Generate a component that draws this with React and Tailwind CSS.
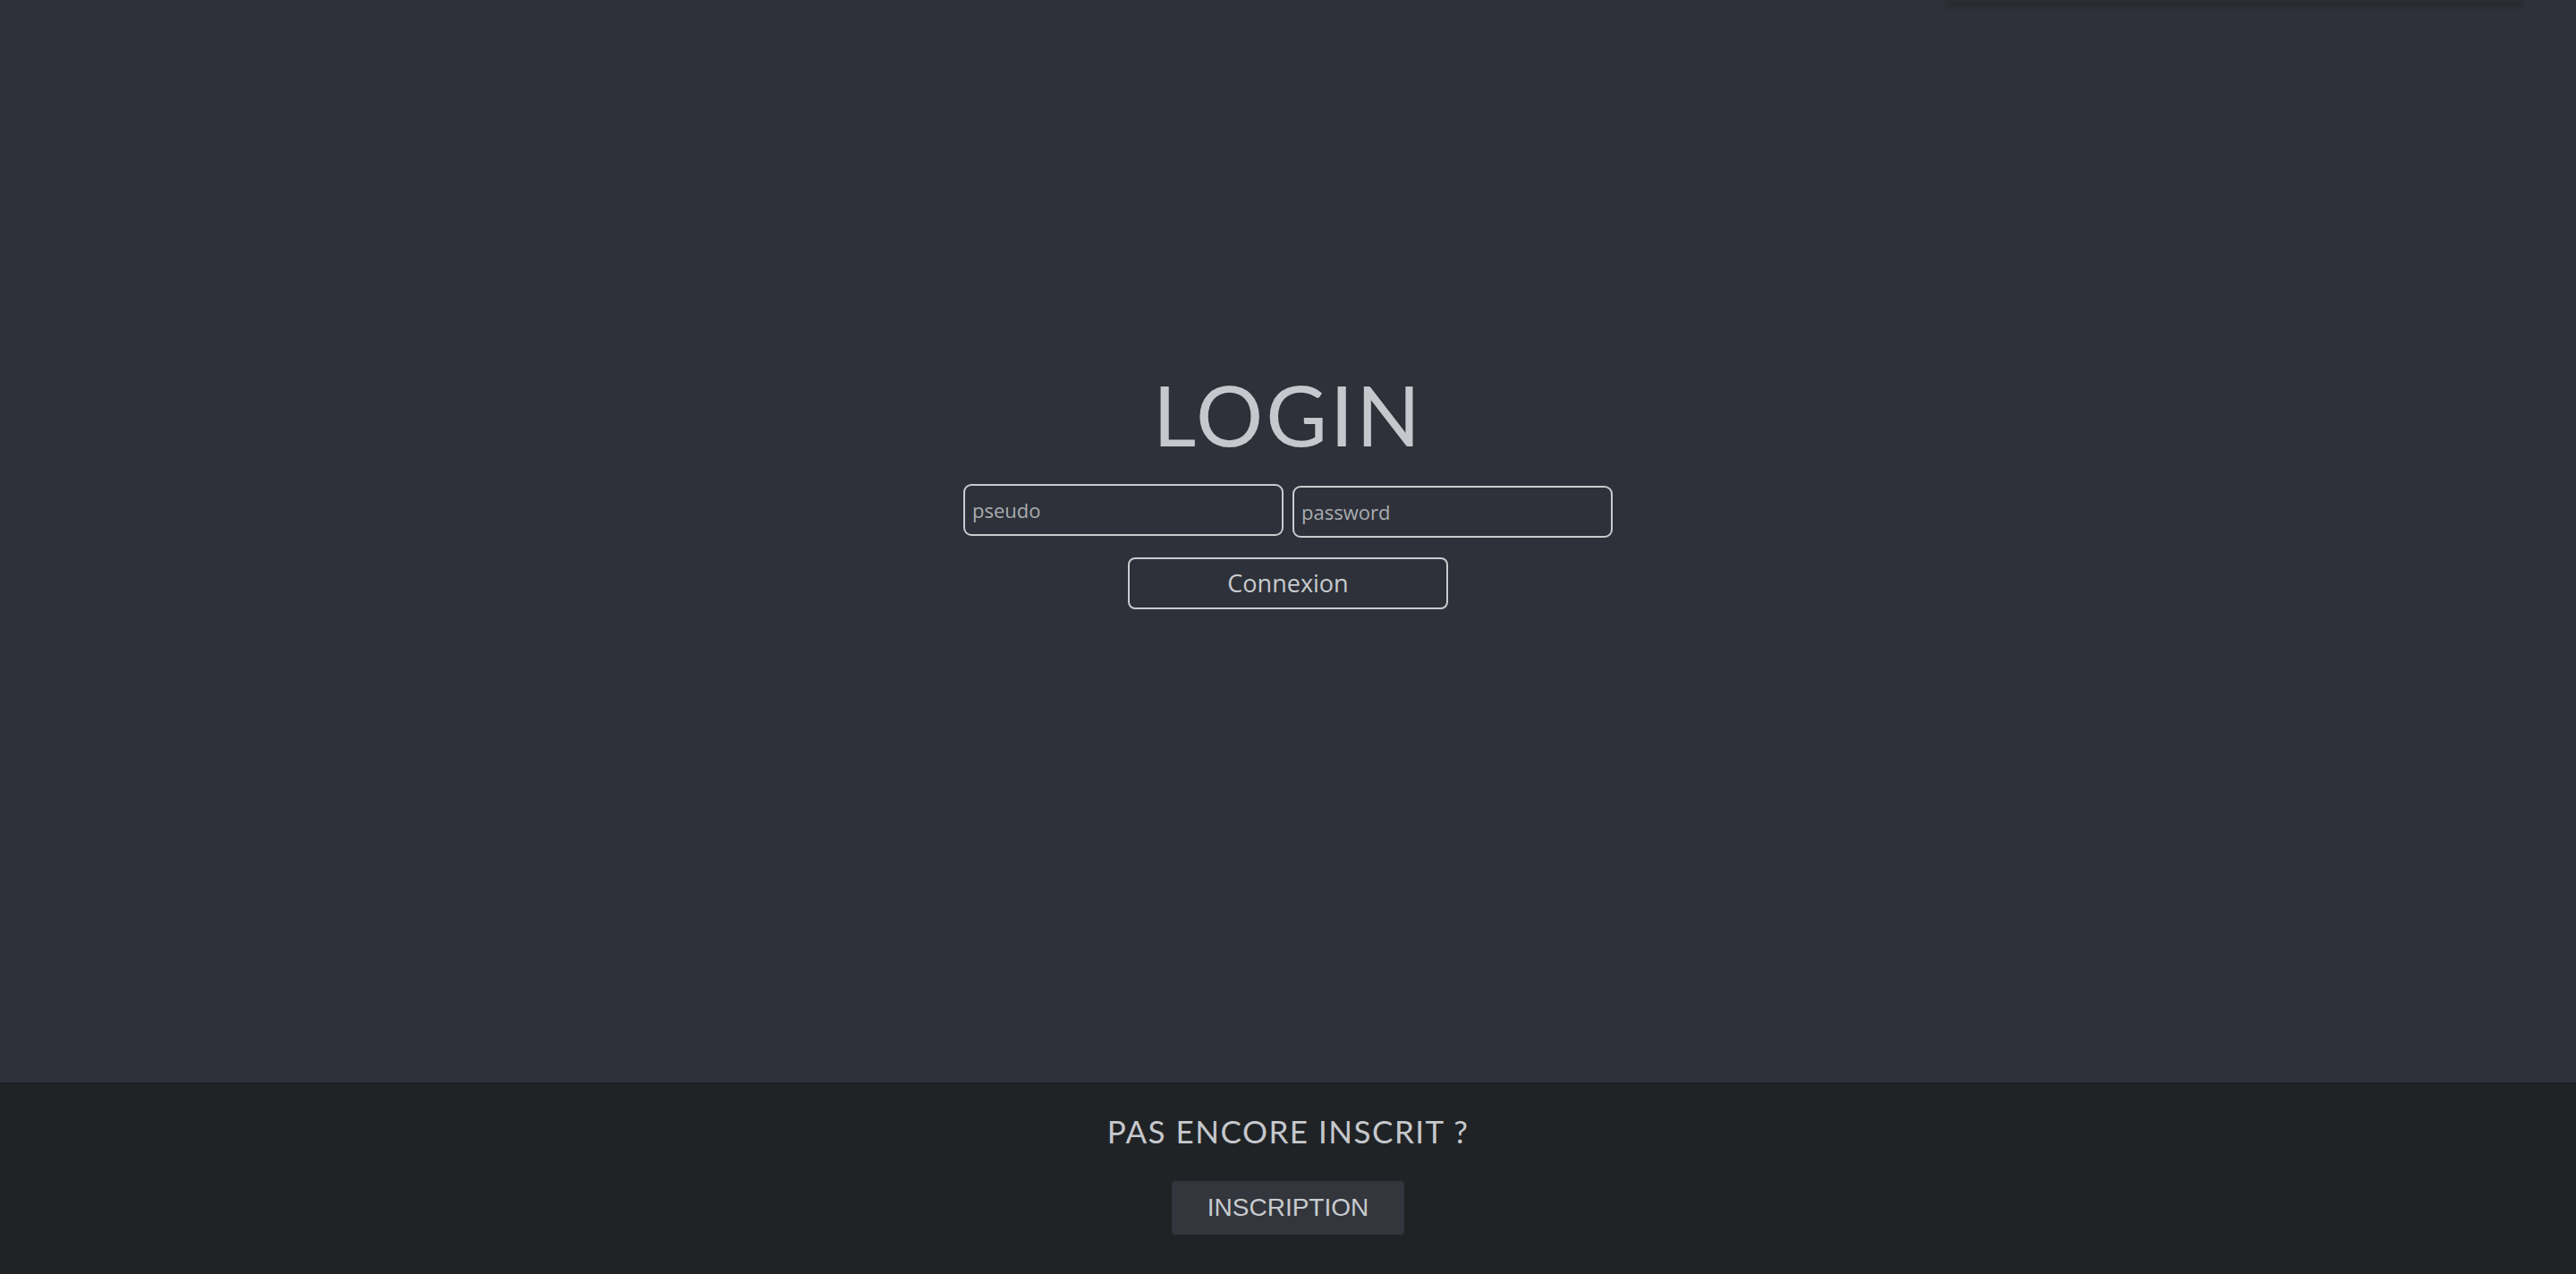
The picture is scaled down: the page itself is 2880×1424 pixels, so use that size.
export default function App() {
  return (
    <div className="relative flex h-[1424px] w-full flex-col overflow-hidden bg-[#2e3139]">
      <div className="pointer-events-none absolute right-[60px] top-0 h-[9px] w-[644px] bg-[#282b30] blur-[2px]" />
      <main className="flex flex-1 flex-col items-center pt-[416px]">
        <h1 className="font-['Lato',sans-serif] text-[94px] font-normal leading-none tracking-[3px] text-[#c5c8cc]">
          LOGIN
        </h1>
        <div className="mt-[31px] flex items-start gap-[10px]">
          <input
            placeholder="pseudo"
            className="h-[58px] w-[358px] rounded-[9px] border-2 border-[#c9cbce] bg-transparent px-[8px] font-['Open_Sans',sans-serif] text-[22px] text-[#c5c8cc] outline-none placeholder:text-[#a9adb1]"
          />
          <input
            placeholder="password"
            type="password"
            className="mt-[2px] h-[58px] w-[358px] rounded-[9px] border-2 border-[#c9cbce] bg-transparent px-[8px] font-['Open_Sans',sans-serif] text-[22px] text-[#c5c8cc] outline-none placeholder:text-[#a9adb1]"
          />
        </div>
        <button className="mt-[22px] h-[58px] w-[358px] rounded-[8px] border-2 border-[#c9cbce] bg-transparent font-['Open_Sans',sans-serif] text-[27px] text-[#c8cbcf]">
          Connexion
        </button>
      </main>
      <footer className="flex h-[214px] flex-col items-center border-t border-[#1c1e21] bg-[#202326]">
        <p className="mt-[36px] font-['Lato',sans-serif] text-[35px] leading-none tracking-[1.5px] text-[#c5c8cc]">
          PAS ENCORE INSCRIT ?
        </p>
        <button className="mt-[38px] h-[60px] w-[260px] rounded-[4px] bg-[#33363c] font-['Liberation_Sans',sans-serif] text-[28px] text-[#c8cbcf]">
          INSCRIPTION
        </button>
      </footer>
    </div>
  );
}
